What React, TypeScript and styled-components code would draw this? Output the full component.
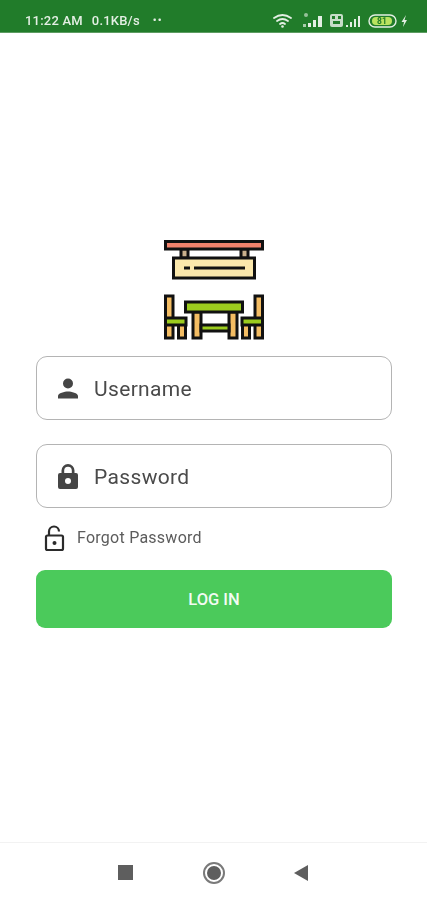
import { createGlobalStyle, styled } from "styled-components";

const Global = createGlobalStyle`
  html, body {
    margin: 0;
    padding: 0;
    background: #ffffff;
    font-family: Roboto, "Liberation Sans", sans-serif;
  }
  * { box-sizing: border-box; }
`;

const Screen = styled.div`
  width: 427px;
  height: 900px;
  display: flex;
  flex-direction: column;
  background: #fff;
  overflow: hidden;
`;

const StatusBar = styled.div`
  height: 33px;
  flex: none;
  background: #217c2a;
  border-bottom: 1px solid #5d9c62;
  color: #e4efe4;
  display: flex;
  align-items: center;
  padding: 9px 20px 0 25px;
  font-size: 13px;
  font-weight: 500;
`;

const StatusText = styled.div`
  display: flex;
  align-items: center;
  letter-spacing: 0.2px;
  filter: blur(0.5px);
`;

const Clock = styled.span`
  margin-right: 9px;
`;

const Dots = styled.span`
  margin-left: 13px;
  letter-spacing: 1px;
  font-size: 11px;
`;

const StatusIcons = styled.div`
  margin-left: auto;
  display: flex;
  align-items: center;
  filter: blur(0.6px);
`;

const Main = styled.main`
  flex: 1;
  display: flex;
  flex-direction: column;
  padding: 206px 35px 0 36px;
`;

const Logo = styled.svg`
  align-self: center;
  width: 102px;
  height: 102px;
  margin-bottom: 15px;
  filter: blur(0.5px);
`;

const Field = styled.div`
  height: 64px;
  border: 1px solid #b4b4b4;
  border-radius: 11px;
  display: flex;
  align-items: center;
  padding: 1px 0 0 19px;
  margin-bottom: 24px;
  color: #4a4a4a;
  font-size: 21px;
  letter-spacing: 0.35px;
  filter: blur(0.5px);
`;

const FieldIcon = styled.svg`
  width: 24px;
  height: 24px;
  margin-right: 14px;
  flex: none;
`;

const LockIcon = styled(FieldIcon)`
  height: 28px;
`;

const ForgotRow = styled.div`
  display: flex;
  align-items: center;
  margin: -10px 0 18px 6px;
  color: #5c5c5c;
  font-size: 16px;
  letter-spacing: 0.25px;
  height: 30px;
  filter: blur(0.5px);
`;

const ForgotIcon = styled.svg`
  width: 26px;
  height: 28px;
  margin-right: 9px;
  margin-top: 4px;
`;

const LoginButton = styled.button`
  height: 58px;
  border: none;
  border-radius: 9px;
  background: #4bca5b;
  color: #f2fbf3;
  font-family: inherit;
  font-size: 16.5px;
  font-weight: 500;
`;

const NavBar = styled.nav`
  height: 58px;
  flex: none;
  border-top: 1px solid #f2f2f2;
  display: flex;
  align-items: center;
  padding: 2px 0 0 118px;
  filter: blur(0.5px);
`;

const SquareKey = styled.div`
  width: 15px;
  height: 15px;
  background: #5e5e5e;
  margin-right: 70px;
`;

const HomeKey = styled.div`
  width: 22px;
  height: 22px;
  border-radius: 50%;
  border: 2px solid #7a7a7a;
  padding: 2px;
  margin-right: 69px;
  &::after {
    content: "";
    display: block;
    width: 14px;
    height: 14px;
    border-radius: 50%;
    background: #5e5e5e;
  }
`;

const BackKey = styled.div`
  width: 0;
  height: 0;
  border-top: 8px solid transparent;
  border-bottom: 8px solid transparent;
  border-right: 14px solid #5e5e5e;
`;

const StatusGlyphs = () => (
  <svg width="134" height="18" viewBox="0 0 134 18">
    <g fill="none" stroke="#e4efe4" strokeWidth="1.8" strokeLinecap="round">
      <path d="M1 6q8.500-6 17 0" />
      <path d="M4 9q5.500-4 11 0" />
      <path d="M7 12q2.500-2 5 0" />
    </g>
    <circle cx="9.500" cy="14.500" r="1.300" fill="#e4efe4" />
    <g fill="#e4efe4">
      <circle cx="33" cy="3" r="2" opacity="0.6" />
      <rect x="30" y="12" width="3" height="3" opacity="0.7" />
      <rect x="35" y="11" width="3" height="4" />
      <rect x="40" y="8" width="3" height="7" />
      <rect x="45" y="4" width="4" height="11" />
      <rect x="57" y="2" width="13" height="13" rx="2" opacity="0.85" />
      <rect x="73" y="13" width="2" height="2" />
      <rect x="77" y="10" width="2" height="5" />
      <rect x="81" y="7" width="2" height="8" />
      <rect x="85" y="4" width="2" height="11" />
    </g>
    <g fill="#217c2a">
      <rect x="59" y="4" width="3" height="3" />
      <rect x="65" y="4" width="3" height="3" />
      <rect x="60" y="9" width="7" height="3" />
    </g>
    <rect x="96" y="3" width="27" height="12" rx="6" fill="none" stroke="#e4efe4" strokeWidth="1.400" />
    <rect x="99" y="5" width="20" height="8" rx="4" fill="#b9e35f" />
    <text x="109" y="12" fontSize="8.500" fontWeight="700" textAnchor="middle" fill="#217c2a" fontFamily="Roboto, sans-serif">81</text>
    <path d="M133 3l-4.500 7h2.500l-1 5 4-7h-2.500z" fill="#e4efe4" />
  </svg>
);

const TableLogo = () => (
  <Logo viewBox="0 0 102 102">
    <g stroke="#111" strokeWidth="3">
      <rect x="18" y="10" width="7" height="9" fill="#c9b08c" />
      <rect x="78" y="10" width="7" height="9" fill="#c9b08c" />
      <rect x="2.500" y="2.500" width="97" height="7.500" fill="#f2826c" />
      <rect x="10.500" y="19" width="81" height="20" fill="#fbe8ac" />
    </g>
    <path d="M21 29h6M31 29h51" stroke="#111" strokeWidth="3" />
    <g stroke="#111" strokeWidth="3">
      <rect x="2.500" y="57" width="7.500" height="42" fill="#f4bd63" />
      <rect x="15.500" y="85" width="7" height="14" fill="#f4bd63" />
      <rect x="92" y="57" width="7.500" height="42" fill="#f4bd63" />
      <rect x="79.500" y="85" width="7" height="14" fill="#f4bd63" />
      <rect x="2.500" y="79" width="20.500" height="7" fill="#9ccc1e" />
      <rect x="79" y="79" width="20.500" height="7" fill="#9ccc1e" />
      <rect x="30" y="73" width="8" height="26" fill="#f4bd63" />
      <rect x="66" y="73" width="8" height="26" fill="#f4bd63" />
      <rect x="38" y="86" width="28" height="6" fill="#9ccc1e" />
      <rect x="22.500" y="63" width="57" height="10" fill="#9ccc1e" />
    </g>
  </Logo>
);

export default function App() {
  return (
    <Screen>
      <Global />
      <StatusBar>
        <StatusText>
          <Clock>11:22 AM</Clock>
          <span>0.1KB/s</span>
          <Dots>••</Dots>
        </StatusText>
        <StatusIcons>
          <StatusGlyphs />
        </StatusIcons>
      </StatusBar>
      <Main>
        <TableLogo />
        <Field>
          <FieldIcon viewBox="0 0 24 24" fill="#454545">
            <path d="M12 11.500a5 5 0 1 0 0-10 5 5 0 0 0 0 10zm0 3c-3.400 0-10 1.500-10 4.500v2.500h20V19c0-3-6.600-4.500-10-4.500z" />
          </FieldIcon>
          Username
        </Field>
        <Field>
          <LockIcon viewBox="0 0 24 28" fill="#454545">
            <path d="M20 10h-1.500V7.500a6.500 6.500 0 0 0-13 0V10H4a2 2 0 0 0-2 2v12a2 2 0 0 0 2 2h16a2 2 0 0 0 2-2V12a2 2 0 0 0-2-2zM8.200 7.500a3.800 3.800 0 0 1 7.600 0V10H8.200zM12 21a3 3 0 1 1 0-6 3 3 0 0 1 0 6z" />
          </LockIcon>
          Password
        </Field>
        <ForgotRow>
          <ForgotIcon viewBox="0 0 26 28" fill="none" stroke="#2b2b2b" strokeWidth="2.200">
            <rect x="4" y="10.500" width="17" height="14.500" rx="1.500" />
            <path d="M7 10.500V6.500a5 5 0 0 1 10 0" />
            <circle cx="12.500" cy="18" r="2" fill="#2b2b2b" stroke="none" />
          </ForgotIcon>
          Forgot Password
        </ForgotRow>
        <LoginButton>LOG IN</LoginButton>
      </Main>
      <NavBar>
        <SquareKey />
        <HomeKey />
        <BackKey />
      </NavBar>
    </Screen>
  );
}
